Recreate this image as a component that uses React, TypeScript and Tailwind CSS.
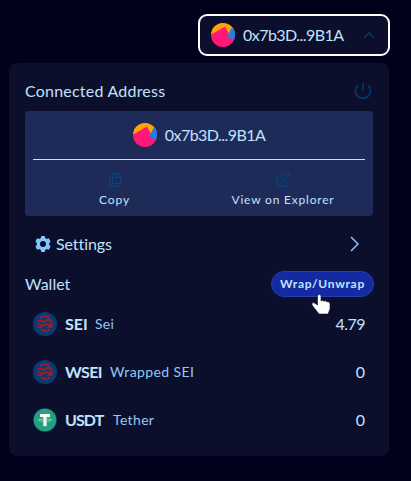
import React from 'react';

function Avatar() {
  return (
    <svg width="24" height="24" viewBox="0 0 24 24" className="shrink-0">
      <defs>
        <clipPath id="avatar"><circle cx="12" cy="12" r="12" /></clipPath>
      </defs>
      <g clipPath="url(#avatar)">
        <rect width="24" height="24" fill="#ff1879" />
        <path d="M0 0H24V9L19 13L14 3.5L2 10.5L0 11Z" fill="#f9a703" />
        <path d="M21.5 3.5L16 13.5L24 17.5V3Z" fill="#247ce5" />
      </g>
    </svg>
  );
}

function SeiLogo() {
  return (
    <svg width="24" height="24" viewBox="0 0 24 24" className="shrink-0">
      <circle cx="12" cy="12" r="12" fill="#073b75" />
      <g fill="none" stroke="#a51b22" strokeWidth="1.9" strokeLinejoin="round">
        <path d="M7.2 5.7C10 4 14 4 16.8 6" />
        <path d="M4.6 9.6C6.5 7.8 8.3 8.2 9.8 9.2S12.8 9.4 14 8.2S16.8 7.6 18.6 8.8" />
        <path d="M17.5 8.5L19.2 11.6" />
        <path d="M4.2 12.6C7 11.6 8 14.2 10.2 13.4S12.6 11.4 14.4 12.4S17.5 13.6 20 12.6" />
        <path d="M4.6 14.8C7 15.8 8.4 14.6 9.6 14.8M14.5 15.2C16 15.8 17.6 15.2 19.4 14.8" />
        <path d="M7.5 18.2C9.4 17 10.4 19 12 19S15 17.6 16.8 18.2" />
      </g>
    </svg>
  );
}

function TetherLogo() {
  return (
    <svg width="24" height="24" viewBox="0 0 24 24" className="shrink-0">
      <circle cx="12" cy="12" r="12" fill="#073f71" />
      <circle cx="12" cy="12" r="11.2" fill="#26a17b" />
      <path d="M7 6H17V9H13.6V18H10.4V9H7Z" fill="white" />
      <ellipse cx="12" cy="12" rx="6.6" ry="1.1" fill="none" stroke="#c9e9df" strokeWidth=".6" />
    </svg>
  );
}

function TokenRow({ logo, symbol, name, amount, symbolClass, nameClass, amountClass }: {
  logo: React.ReactNode; symbol: string; name: string; amount: string;
  symbolClass: string; nameClass: string; amountClass: string;
}) {
  return (
    <div className="flex h-12 items-center pr-2 pl-2">
      {logo}
      <span className={`ml-2 shrink-0 whitespace-nowrap font-bold ${symbolClass}`}>{symbol}</span>
      <span className={`ml-2 whitespace-nowrap text-[14px] text-[#91c8f8] ${nameClass}`}>{name}</span>
      <span className={`ml-auto ${amountClass}`}>{amount}</span>
    </div>
  );
}

export default function App() {
  return (
    <main className="relative h-[481px] w-[411px] overflow-hidden bg-[#01011b] pt-[14px] font-['Lato',sans-serif] text-[16px] leading-6 text-[#c0e2ff]">
      <button className="ml-[198px] flex h-[42px] w-[192px] items-center rounded-[9px] border-2 border-white bg-[#0b0f2c] pr-[13px] pl-[11px]">
        <Avatar />
        <span className="ml-2 whitespace-nowrap tracking-[-0.55px]">0x7b3D...9B1A</span>
        <svg className="ml-auto" width="12" height="8" viewBox="0 0 12 8" fill="none" stroke="#063c73" strokeWidth="1.3"><path d="M1 7L6 2L11 7" /></svg>
      </button>

      <section className="mt-[7px] ml-[9px] h-[393px] w-[380px] rounded-lg bg-[#0b0f2c] px-4 pt-4">
        <div className="flex h-6 items-center justify-between">
          <h2 className="whitespace-nowrap tracking-[0.22px]">Connected Address</h2>
          <svg className="mr-px" width="18" height="18" viewBox="0 0 18 18" fill="none" stroke="#003e7b" strokeWidth="1.4"><path d="M9 1V9M4 3.2A7.5 7.5 0 1 0 14 3.2" /></svg>
        </div>

        <div className="mt-2 h-[105px] w-[348px] rounded bg-[#1e2b58] px-2 pt-3">
          <div className="flex h-6 items-center justify-center">
            <Avatar />
            <span className="ml-2 whitespace-nowrap tracking-[-0.55px]">0x7b3D...9B1A</span>
          </div>
          <div className="mt-3 h-px bg-[#c0e2ff]" />
          <div className="grid h-[56px] grid-cols-[163px_1fr] text-[12px] leading-[18px]">
            <button className="flex flex-col items-center pt-[12px]">
              <svg width="16" height="16" viewBox="0 0 16 16" fill="none" stroke="#004785" strokeWidth="1.1"><path d="M5.5 1.5H10.5L14 5V11.5H5.5ZM9.5 1.5V5.5H14M5.5 4.5H2.5V14.5H11V11.5" /></svg>
              <span className="mt-[3px] tracking-[0.9px]">Copy</span>
            </button>
            <button className="flex flex-col items-center pt-[12px] pl-[5px]">
              <svg width="16" height="16" viewBox="0 0 16 16" fill="none" stroke="#063f79" strokeWidth="1.6" strokeLinecap="round" strokeLinejoin="round"><path d="M7.5 4H3.8Q2 4 2 5.8V12.5Q2 14.3 3.8 14.3H10.5Q12.3 14.3 12.3 12.5V9M6 11L14.2 2M10.5 1.8H14.4V5.5" /></svg>
              <span className="mt-[3px] whitespace-nowrap tracking-[0.8px]">View on Explorer</span>
            </button>
          </div>
        </div>

        <button className="mt-4 flex h-6 w-full items-center pr-[14px] pl-[10px]">
          <svg width="16" height="16" viewBox="0 0 16 16" fill="#82c5ff"><path fillRule="evenodd" d="M6.4 0H9.6L10.2 2.1L11.5 2.9L13.8 2.3L15.6 5.5L14.2 7V9L15.6 10.5L13.8 13.7L11.5 13.1L10.2 13.9L9.6 16H6.4L5.8 13.9L4.5 13.1L2.2 13.7L.4 10.5L1.8 9V7L.4 5.5L2.2 2.3L4.5 2.9L5.8 2.1ZM8 5A3 3 0 1 0 8 11A3 3 0 1 0 8 5Z" /></svg>
          <span className="ml-[5px] tracking-[-0.08px]">Settings</span>
          <svg className="ml-auto" width="9" height="16" viewBox="0 0 9 16" fill="none" stroke="#82c5ff" strokeWidth="1.5"><path d="M1 1L8 8L1 15" /></svg>
        </button>

        <div className="mt-[15px] flex h-[26px] w-[349px] items-center justify-between">
          <h2>Wallet</h2>
          <button className="h-[26px] w-[103px] rounded-full border border-[#243caf] bg-[#142aa0] text-center text-[12px] leading-6 font-bold whitespace-nowrap tracking-[0.7px]">Wrap/Unwrap</button>
        </div>

        <div className="mt-[3px]">
          <TokenRow logo={<SeiLogo />} symbol="SEI" name="Sei" amount="4.79" symbolClass="w-[22px]" nameClass="tracking-[0.3px]" amountClass="tracking-[-0.5px]" />
          <TokenRow logo={<SeiLogo />} symbol="WSEI" name="Wrapped SEI" amount="0" symbolClass="w-[37px] tracking-[-0.6px]" nameClass="tracking-[0.4px]" amountClass="" />
          <TokenRow logo={<TetherLogo />} symbol="USDT" name="Tether" amount="0" symbolClass="w-[40px] tracking-[-0.9px]" nameClass="tracking-[0.35px]" amountClass="" />
        </div>
      </section>

      <svg className="absolute top-[294px] left-[311px]" width="20" height="21" viewBox="0 0 20 21">
        <path d="M7 1Q8.7-.2 10 1.5V7Q12 5.8 13 7.2Q15 6.3 16 7.8Q19 7.2 19 10V15L17 20H8L1 11Q.5 8.2 3 8.7L6.5 11V2Z" fill="white" stroke="#111322" strokeWidth=".6" />
      </svg>
    </main>
  );
}
